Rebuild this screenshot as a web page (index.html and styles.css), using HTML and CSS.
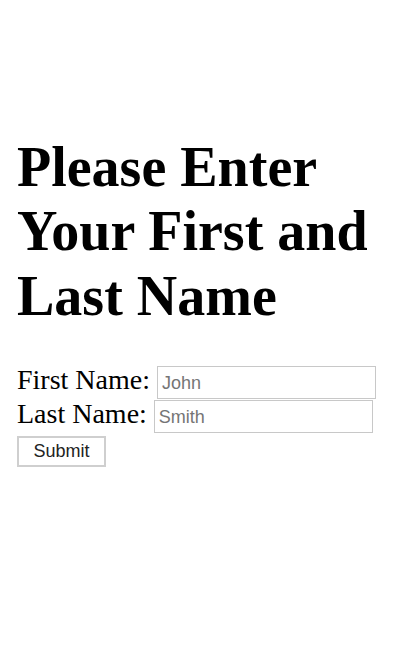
FILE: index.html
```html
<!DOCTYPE html>
<html>
<head>
<meta charset="utf-8">
<link rel="stylesheet" href="styles.css">
</head>
<body>
<h1 class="title">Please Enter Your First and Last Name</h1>
<form class="form">
  <div class="row">
    <label class="label" for="first">First Name:</label>
    <input class="field field-first" id="first" type="text" placeholder="John">
  </div>
  <div class="row">
    <label class="label" for="last">Last Name:</label>
    <input class="field field-last" id="last" type="text" placeholder="Smith">
  </div>
  <button class="submit" type="button">Submit</button>
</form>
</body>
</html>
```
FILE: styles.css
```css
html, body {
  background: #fff;
}
body {
  margin: 0;
  padding: 0 17px;
  font-family: "Liberation Serif", "Times New Roman", serif;
  color: #000;
}
.title {
  margin: 135px 0 0;
  font-size: 56px;
  line-height: 64.4px;
  font-weight: bold;
}
.form {
  margin-top: 36px;
  display: flex;
  flex-direction: column;
  align-items: flex-start;
}
.row {
  display: flex;
  align-items: baseline;
  gap: 7px;
  height: 34px;
}
.label {
  font-size: 28px;
  line-height: 32px;
}
.field {
  box-sizing: border-box;
  height: 33px;
  border: 1px solid #c8c8c8;
  padding: 3px 4px 0;
  font-family: "Liberation Sans", Arial, sans-serif;
  font-size: 18px;
  color: #000;
  outline: none;
  margin: 0;
}
.field::placeholder {
  color: #757575;
}
.field-first {
  width: 219px;
}
.field-last {
  width: 219px;
}
.submit {
  margin-top: 4px;
  box-sizing: border-box;
  width: 89px;
  height: 31px;
  background: #fff;
  border: 2px solid #cfcfcf;
  font-family: "Liberation Sans", Arial, sans-serif;
  font-size: 18px;
  color: #222;
  padding: 0;
}
```
